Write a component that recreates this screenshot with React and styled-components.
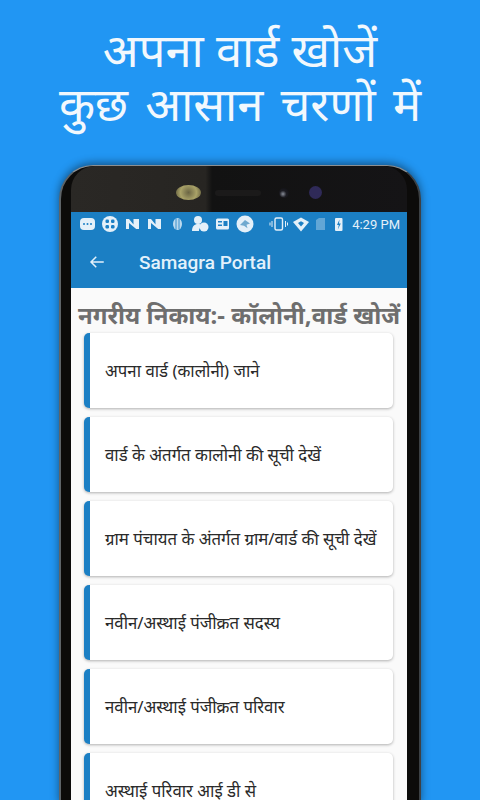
import React from "react";
import styled, { createGlobalStyle } from "styled-components";

const GlobalStyle = createGlobalStyle`
  html, body {
    margin: 0;
    padding: 0;
    background: #2196f3;
  }
  #root {
    width: 480px;
    height: 800px;
    overflow: hidden;
  }
`;

const items = [
  "अपना वार्ड (कालोनी) जाने",
  "वार्ड के अंतर्गत कालोनी की सूची देखें",
  "ग्राम पंचायत के अंतर्गत ग्राम/वार्ड की सूची देखें",
  "नवीन/अस्थाई पंजीक्रत सदस्य",
  "नवीन/अस्थाई पंजीक्रत परिवार",
  "अस्थाई परिवार आई डी से",
];

// notification and system icons, x is measured from the left of the icon row
function StatusIcons() {
  return (
    <svg width="264" height="18" viewBox="0 0 264 18" fill="#e4f0f9">
      <rect x="0" y="3" width="15" height="12" rx="4" />
      <circle cx="4" cy="9" r="1" fill="#1b7fc4" />
      <circle cx="7.500" cy="9" r="1" fill="#1b7fc4" />
      <circle cx="11" cy="9" r="1" fill="#1b7fc4" />
      <circle cx="30" cy="9" r="8" />
      <rect x="25.500" y="4.500" width="3.500" height="3.500" rx="1.200" fill="#1b7fc4" />
      <rect x="31" y="4.500" width="3.500" height="3.500" rx="1.200" fill="#1b7fc4" />
      <rect x="25.500" y="10" width="3.500" height="3.500" rx="1.200" fill="#1b7fc4" />
      <rect x="31" y="10" width="3.500" height="3.500" rx="1.200" fill="#1b7fc4" />
      <path d="M46 14V4h3l4.500 5.500V4H59v10h-2.800L49 8v6z" />
      <path d="M68 14V4h3l4.500 5.500V4H81v10h-2.800L71 8v6z" />
      <ellipse cx="97.500" cy="9" rx="4.500" ry="6" opacity="0.8" />
      <path d="M96 3.500v11M99 4v10" stroke="#1b7fc4" strokeWidth="0.8" />
      <circle cx="118" cy="5" r="4" />
      <path d="M112 16c0-4.500 2.500-7 6-7 2 0 3.500.6 4.500 1.800-2.200 1-3.500 2.800-3.500 5.200z" />
      <circle cx="124" cy="12" r="4.500" />
      <rect x="136" y="3.500" width="13" height="11" rx="1.500" />
      <rect x="138" y="6" width="4" height="1.500" fill="#1b7fc4" />
      <rect x="138" y="9.500" width="4" height="1.500" fill="#1b7fc4" />
      <rect x="143.500" y="6" width="4" height="5" fill="#1b7fc4" />
      <circle cx="165" cy="9" r="8.500" />
      <path d="M160 10l5-5 5 3.500-3.500 1.200 1 3.500-3.500-2.500z" fill="#6fa9cf" />
      <rect x="195" y="3" width="7.500" height="12" rx="1.500" fill="none" stroke="#e4f0f9" strokeWidth="1.400" />
      <path d="M192 6v6M205.500 6v6M190 7.500v3M207.500 7.500v3" stroke="#e4f0f9" strokeWidth="1" />
      <path d="M213 7l8-4.500 8 4.500-8 9.500z" />
      <path d="M218 8l3-1.800 3 1.800-3 3.500z" fill="#1b7fc4" />
      <path d="M236 15V5l3-2h6v12z" opacity="0.35" />
      <rect x="255" y="3" width="7.500" height="13" rx="1" />
      <path d="M259.500 4.500l-2.500 5.500h1.800l-1 4.500 3-6h-1.800z" fill="#1b7fc4" />
    </svg>
  );
}

export default function App() {
  return (
    <>
      <GlobalStyle />
      <Page>
        <Headline>
          <HeadlineRow>अपना वार्ड खोजें</HeadlineRow>
          <HeadlineRow $wide>कुछ आसान चरणों में</HeadlineRow>
        </Headline>
        <Phone>
          <Bezel>
            <Earpiece />
            <Speaker />
            <Lens />
            <Sensor />
          </Bezel>
          <Screen>
            <StatusBar>
              <StatusIcons />
              <Clock>4:29 PM</Clock>
            </StatusBar>
            <AppBar>
              <svg width="18" height="18" viewBox="0 0 24 24" fill="none" stroke="#e3f1fb" strokeWidth="2">
                <path d="M21 12H4M11 5l-7 7 7 7" />
              </svg>
              <AppTitle>Samagra Portal</AppTitle>
            </AppBar>
            <Content>
              <Heading>नगरीय निकाय:- कॉलोनी,वार्ड खोजें</Heading>
              <List>
                {items.map((label) => (
                  <Card key={label}>{label}</Card>
                ))}
              </List>
            </Content>
          </Screen>
        </Phone>
      </Page>
    </>
  );
}

const Page = styled.div`
  width: 480px;
  height: 800px;
  overflow: hidden;
  background: #2196f3;
  display: flex;
  flex-direction: column;
  align-items: center;
`;

const Headline = styled.h1`
  margin: 0;
  padding-top: 22px;
  height: 165px;
  flex-shrink: 0;
  box-sizing: border-box;
  display: flex;
  flex-direction: column;
  align-items: center;
  font-family: "Noto Sans", "Liberation Sans", sans-serif;
  font-size: 47px;
  font-weight: 400;
  color: #f2f8fd;
  white-space: nowrap;
`;

const HeadlineRow = styled.div`
  height: 54px;
  line-height: 54px;
  word-spacing: ${(p) => (p.$wide ? "5px" : "0")};
`;

const Phone = styled.div`
  width: 362px;
  height: 640px;
  flex-shrink: 0;
  box-sizing: border-box;
  padding: 0 12px 0 10px;
  background: #0c0b0a;
  border-radius: 34px 34px 0 0;
  border-top: 1px solid #8b8f92;
  border-left: 2px solid #5e6468;
  border-right: 2px solid #3c4145;
  box-shadow: 0 -2px 8px rgba(0, 0, 0, 0.45);
  display: flex;
  flex-direction: column;
`;

const Bezel = styled.div`
  height: 46px;
  flex-shrink: 0;
  display: flex;
  align-items: center;
  background: linear-gradient(90deg, #2a2825 0%, #272522 40%, #121212 42%, #151416 100%);
  border-radius: 24px 24px 0 0;
  padding: 7px 0 0 105px;
  box-sizing: border-box;
`;

const Earpiece = styled.div`
  width: 25px;
  height: 15px;
  border-radius: 50%;
  background: radial-gradient(circle, #6b6544 0%, #a9a268 55%, #5a5538 100%);
`;

const Speaker = styled.div`
  width: 46px;
  height: 6px;
  margin-left: 14px;
  border-radius: 3px;
  background: #1b1a1a;
`;

const Lens = styled.div`
  width: 10px;
  height: 10px;
  margin-left: 18px;
  border-radius: 50%;
  background: radial-gradient(circle at 40% 60%, #8a8f9a 0%, #1c1c22 40%, #0c0c0e 100%);
`;

const Sensor = styled.div`
  width: 13px;
  height: 13px;
  margin-left: 20px;
  border-radius: 50%;
  background: #2f2a58;
`;

const Screen = styled.div`
  flex: 1;
  min-height: 0;
  display: flex;
  flex-direction: column;
  background: #fafafa;
  overflow: hidden;
`;

const StatusBar = styled.div`
  height: 24px;
  flex-shrink: 0;
  display: flex;
  align-items: center;
  padding: 0 7px 0 9px;
  background: #1b7fc4;
`;

const Clock = styled.span`
  margin-left: auto;
  font-family: Roboto, "Liberation Sans", sans-serif;
  font-size: 13px;
  color: #e4f0f9;
  white-space: nowrap;
`;

const AppBar = styled.div`
  height: 52px;
  flex-shrink: 0;
  display: flex;
  align-items: center;
  padding: 0 0 0 17px;
  gap: 33px;
  background: #1b7fc4;
`;

const AppTitle = styled.div`
  font-family: Roboto, "Liberation Sans", sans-serif;
  font-size: 19px;
  font-weight: 500;
  color: #e3f1fb;
`;

const Content = styled.div`
  flex: 1;
  min-height: 0;
  display: flex;
  flex-direction: column;
  padding-top: 15px;
`;

const Heading = styled.div`
  font-family: "Noto Sans", "Liberation Sans", sans-serif;
  font-size: 24px;
  line-height: 24px;
  font-weight: 700;
  color: #6e6e6e;
  text-align: center;
  white-space: nowrap;
`;

const List = styled.div`
  display: flex;
  flex-direction: column;
  gap: 9px;
  padding: 6px 14px 0 13px;
`;

const Card = styled.div`
  height: 75px;
  flex-shrink: 0;
  box-sizing: border-box;
  display: flex;
  align-items: center;
  padding-left: 15px;
  background: #fff;
  border-left: 6px solid #1b7fc4;
  border-radius: 5px;
  box-shadow: 0 1px 3px rgba(0, 0, 0, 0.3);
  font-family: "Noto Sans", "Liberation Sans", sans-serif;
  font-size: 16.8px;
  color: #2a2a2a;
  white-space: nowrap;
`;
